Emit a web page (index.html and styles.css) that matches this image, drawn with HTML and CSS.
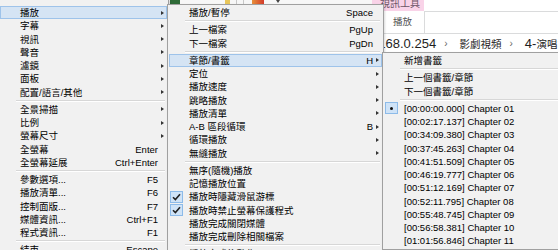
FILE: index.html
```html
<!DOCTYPE html>
<html>
	<head>
		<meta charset="UTF-8">
		<title>播放選單</title>
		<link rel="stylesheet" href="styles.css">
	</head>
	<body>
		<!--後面的檔案總管視窗-->
		<div class="desk">
			<div class="title-bar">
				<div class="quick-bar">
					<span class="qa qa-green"></span>
					<span class="qa qa-yellow"></span>
					<span class="qa-sep"></span>
					<span class="qa-sep"></span>
					<span class="qa qa-red"></span>
					<span class="qa-down"></span>
				</div>
				<div class="context-tab">視訊工具</div>
			</div>
			<div class="ribbon-tabs">
				<div class="ribbon-tab">播放</div>
				<div class="ribbon-rest"></div>
			</div>
			<div class="address-bar">
				<span>192.168.0.254</span><span class="crumb">›</span><span class="cjk">影劇視頻</span><span class="crumb">›</span><span>4-</span><span class="cjk">演唱會</span>
			</div>
		</div>

		<!--主選單-->
		<div class="menu menu-main">
			<div class="item on has-sub"><span class="ic"></span><span class="txt">播放</span><span class="arr"></span></div>
			<div class="item has-sub"><span class="ic"></span><span class="txt">字幕</span><span class="arr"></span></div>
			<div class="item has-sub"><span class="ic"></span><span class="txt">視訊</span><span class="arr"></span></div>
			<div class="item has-sub"><span class="ic"></span><span class="txt">聲音</span><span class="arr"></span></div>
			<div class="item has-sub"><span class="ic"></span><span class="txt">濾鏡</span><span class="arr"></span></div>
			<div class="item has-sub"><span class="ic"></span><span class="txt">面板</span><span class="arr"></span></div>
			<div class="item has-sub"><span class="ic"></span><span class="txt">配置/語言/其他</span><span class="arr"></span></div>
			<div class="sep"></div>
			<div class="item has-sub"><span class="ic"></span><span class="txt">全景掃描</span><span class="arr"></span></div>
			<div class="item has-sub"><span class="ic"></span><span class="txt">比例</span><span class="arr"></span></div>
			<div class="item has-sub"><span class="ic"></span><span class="txt">螢幕尺寸</span><span class="arr"></span></div>
			<div class="item"><span class="ic"></span><span class="txt">全螢幕</span><span class="key">Enter</span><span class="arr"></span></div>
			<div class="item"><span class="ic"></span><span class="txt">全螢幕延展</span><span class="key">Ctrl+Enter</span><span class="arr"></span></div>
			<div class="sep"></div>
			<div class="item"><span class="ic"></span><span class="txt">參數選項...</span><span class="key">F5</span><span class="arr"></span></div>
			<div class="item"><span class="ic"></span><span class="txt">播放清單...</span><span class="key">F6</span><span class="arr"></span></div>
			<div class="item"><span class="ic"></span><span class="txt">控制面版...</span><span class="key">F7</span><span class="arr"></span></div>
			<div class="item"><span class="ic"></span><span class="txt">媒體資訊...</span><span class="key">Ctrl+F1</span><span class="arr"></span></div>
			<div class="item"><span class="ic"></span><span class="txt">程式資訊...</span><span class="key">F1</span><span class="arr"></span></div>
			<div class="sep"></div>
			<div class="item"><span class="ic"></span><span class="txt">結束</span><span class="key">Escape</span><span class="arr"></span></div>
		</div>

		<!--播放子選單-->
		<div class="menu menu-play">
			<div class="item"><span class="ic"></span><span class="txt">播放/暫停</span><span class="key">Space</span><span class="arr"></span></div>
			<div class="sep"></div>
			<div class="item"><span class="ic"></span><span class="txt">上一檔案</span><span class="key">PgUp</span><span class="arr"></span></div>
			<div class="item"><span class="ic"></span><span class="txt">下一檔案</span><span class="key">PgDn</span><span class="arr"></span></div>
			<div class="sep"></div>
			<div class="item on has-sub"><span class="ic"></span><span class="txt">章節/書籤</span><span class="key">H</span><span class="arr"></span></div>
			<div class="item has-sub"><span class="ic"></span><span class="txt">定位</span><span class="arr"></span></div>
			<div class="item has-sub"><span class="ic"></span><span class="txt">播放速度</span><span class="arr"></span></div>
			<div class="item has-sub"><span class="ic"></span><span class="txt">跳略播放</span><span class="arr"></span></div>
			<div class="item has-sub"><span class="ic"></span><span class="txt">播放清單</span><span class="arr"></span></div>
			<div class="item has-sub"><span class="ic"></span><span class="txt">A-B 區段循環</span><span class="key">B</span><span class="arr"></span></div>
			<div class="item has-sub"><span class="ic"></span><span class="txt">循環播放</span><span class="arr"></span></div>
			<div class="item has-sub"><span class="ic"></span><span class="txt">無縫播放</span><span class="arr"></span></div>
			<div class="sep"></div>
			<div class="item"><span class="ic"></span><span class="txt">無序(隨機)播放</span><span class="arr"></span></div>
			<div class="item"><span class="ic"></span><span class="txt">記憶播放位置</span><span class="arr"></span></div>
			<div class="item"><span class="ic"><span class="mark"><svg width="9" height="8" viewBox="0 0 9 8"><path d="M1 4.2 L3.4 6.6 L8 1.2" fill="none" stroke="#222" stroke-width="1.6"/></svg></span></span><span class="txt">播放時隱藏滑鼠游標</span><span class="arr"></span></div>
			<div class="item"><span class="ic"><span class="mark"><svg width="9" height="8" viewBox="0 0 9 8"><path d="M1 4.2 L3.4 6.6 L8 1.2" fill="none" stroke="#222" stroke-width="1.6"/></svg></span></span><span class="txt">播放時禁止螢幕保護程式</span><span class="arr"></span></div>
			<div class="item"><span class="ic"></span><span class="txt">播放完成關閉媒體</span><span class="arr"></span></div>
			<div class="item"><span class="ic"></span><span class="txt">播放完成刪除相關檔案</span><span class="arr"></span></div>
			<div class="sep"></div>
			<div class="item has-sub"><span class="ic"></span><span class="txt">播放完成後動作</span><span class="arr"></span></div>
		</div>

		<!--章節/書籤子選單-->
		<div class="menu menu-chapter">
			<div class="item"><span class="ic"></span><span class="txt">新增書籤</span></div>
			<div class="sep"></div>
			<div class="item"><span class="ic"></span><span class="txt">上一個書籤/章節</span></div>
			<div class="item"><span class="ic"></span><span class="txt">下一個書籤/章節</span></div>
			<div class="sep"></div>
			<div class="item chapter"><span class="ic"><span class="mark"><span class="dot"></span></span></span><span class="txt">[00:00:00.000] Chapter 01</span></div>
			<div class="item chapter"><span class="ic"></span><span class="txt">[00:02:17.137] Chapter 02</span></div>
			<div class="item chapter"><span class="ic"></span><span class="txt">[00:34:09.380] Chapter 03</span></div>
			<div class="item chapter"><span class="ic"></span><span class="txt">[00:37:45.263] Chapter 04</span></div>
			<div class="item chapter"><span class="ic"></span><span class="txt">[00:41:51.509] Chapter 05</span></div>
			<div class="item chapter"><span class="ic"></span><span class="txt">[00:46:19.777] Chapter 06</span></div>
			<div class="item chapter"><span class="ic"></span><span class="txt">[00:51:12.169] Chapter 07</span></div>
			<div class="item chapter"><span class="ic"></span><span class="txt">[00:52:11.795] Chapter 08</span></div>
			<div class="item chapter"><span class="ic"></span><span class="txt">[00:55:48.745] Chapter 09</span></div>
			<div class="item chapter"><span class="ic"></span><span class="txt">[00:56:58.381] Chapter 10</span></div>
			<div class="item chapter"><span class="ic"></span><span class="txt">[01:01:56.846] Chapter 11</span></div>
		</div>
	</body>
</html>
```

FILE: styles.css
```css
body {
	margin: 0;
	width: 558px;
	height: 250px;
	overflow: hidden;
	position: relative;
	background: #fff;
	font-family: "Liberation Sans", "Noto Sans CJK TC", sans-serif;
	font-size: 9.5px;
	color: #000;
}

/* 背景視窗 */
.desk {
	display: flex;
	flex-direction: column;
}
.title-bar {
	display: flex;
	height: 11px;
	overflow: hidden;
}
.quick-bar {
	flex: none;
	width: 372px;
	padding-left: 170px;
	display: flex;
	align-items: flex-start;
	box-sizing: border-box;
	background: #f7f7f7;
}
.qa {
	display: block;
	height: 4px;
}
.qa-green {
	width: 10px;
	background: #2f6b38;
}
.qa-yellow {
	width: 5px;
	margin-left: 45px;
	background: #e8c65a;
}
.qa-sep {
	width: 1px;
	height: 4px;
	margin-left: 6px;
	background: #c8c8c8;
}
.qa-red {
	width: 12px;
	margin-left: 8px;
	background: linear-gradient(90deg, #e8903a, #d23a2a);
}
.qa-down {
	width: 0;
	height: 0;
	margin-left: 12px;
	border-top: 3px solid #444;
	border-left: 2px solid transparent;
	border-right: 2px solid transparent;
}
.context-tab {
	flex: none;
	width: 52px;
	height: 11px;
	background: #f9d3e8;
	color: #6b5566;
	font-size: 10px;
	line-height: 8px;
	padding-left: 8px;
	box-sizing: border-box;
	white-space: nowrap;
	overflow: hidden;
}
.ribbon-tabs {
	display: flex;
	height: 22px;
	padding-left: 372px;
	border-bottom: 1px solid #dadbdc;
}
.ribbon-tab {
	width: 53px;
	padding-left: 21px;
	box-sizing: border-box;
	border-right: 1px solid #dadbdc;
	color: #555;
	line-height: 22px;
}
.ribbon-rest {
	flex: 1;
	border-top: 1px solid #dadbdc;
}
.address-bar {
	height: 18px;
	padding-left: 353px;
	display: flex;
	align-items: center;
	font-size: 13px;
	color: #1e1e1e;
	white-space: nowrap;
	overflow: hidden;
}
.address-bar .cjk {
	font-size: 10.5px;
}
.address-bar .crumb {
	font-size: 10px;
	color: #666;
	margin: 0 12px 0 8px;
}

/* 選單 */
.menu {
	position: absolute;
	background: #f1f1f1;
	border: 1px solid #a0a0a0;
	padding: 1px 0;
	box-shadow: 1px 1px 2px rgba(0, 0, 0, 0.15);
}
.menu-main {
	left: -2px;
	top: -1px;
	width: 169px;
	padding-top: 6px;
}
.menu-play {
	left: 167px;
	top: 4px;
	width: 215px;
}
.menu-chapter {
	left: 382px;
	top: 52px;
	width: 200px;
}
.item {
	display: flex;
	align-items: center;
	height: 13.25px;
	margin: 0 1px;
	border: 1px solid transparent;
	box-sizing: border-box;
	line-height: 11px;
	white-space: nowrap;
}
.item.on {
	background: #d5e4f4;
	border-color: #9ec3ea;
}
.ic {
	width: 15px;
	flex: none;
	display: flex;
	align-items: center;
}
.txt {
	flex: 1;
	margin-left: 4px;
}
.key {
	margin-left: 16px;
}
.arr {
	width: 8px;
	flex: none;
	display: flex;
	align-items: center;
	justify-content: center;
}
.has-sub .arr::after {
	content: "";
	width: 0;
	height: 0;
	border-left: 3px solid #333;
	border-top: 2.5px solid transparent;
	border-bottom: 2.5px solid transparent;
}
.sep {
	height: 1px;
	margin: 1px 3px 1px 17px;
	background: #d7d7d7;
	border-bottom: 1px solid #fff;
}
.mark {
	width: 13px;
	height: 12px;
	background: #cfe3f7;
	border: 1px solid #8dbbe9;
	box-sizing: border-box;
	display: flex;
	align-items: center;
	justify-content: center;
}
.mark svg {
	display: block;
}
.dot {
	width: 3px;
	height: 3px;
	border-radius: 50%;
	background: #111;
}
```
